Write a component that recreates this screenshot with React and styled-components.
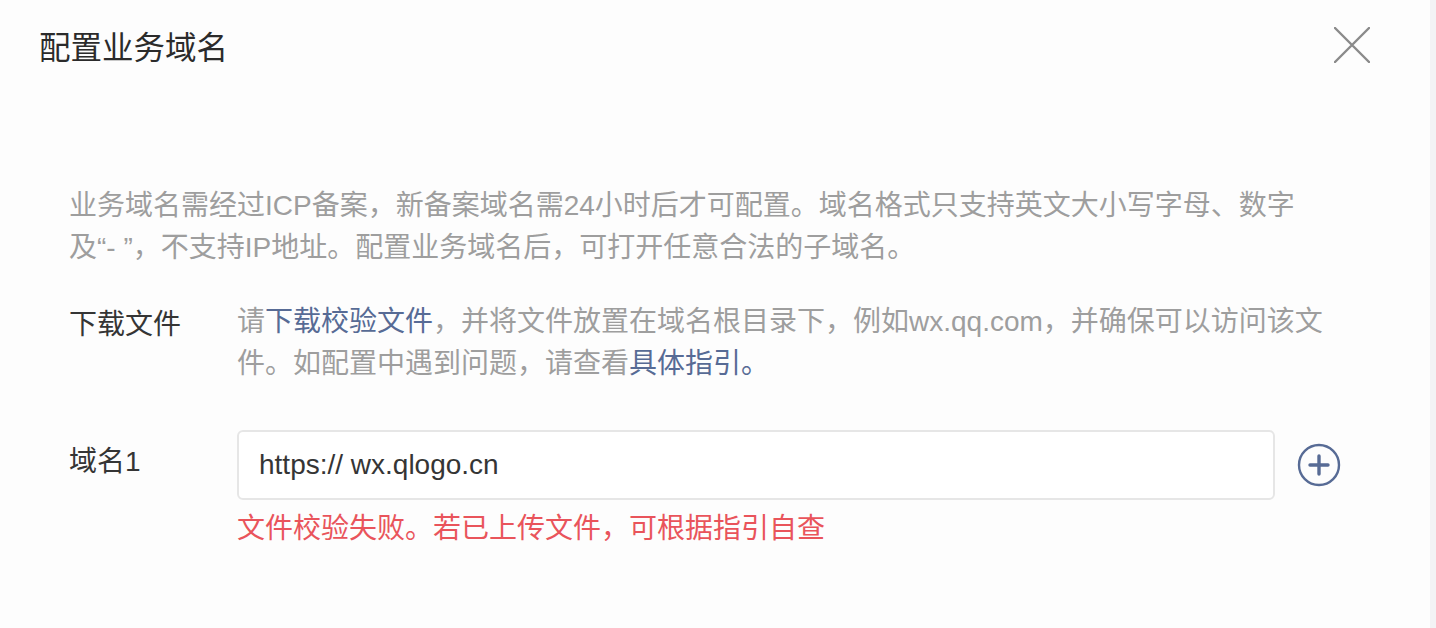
import styled, { createGlobalStyle } from "styled-components";

const GlobalStyle = createGlobalStyle`
  html, body {
    margin: 0;
    padding: 0;
    background: #ffffff;
  }
  body {
    font-family: "Liberation Sans", "Noto Sans CJK SC", sans-serif;
  }
`;

const Page = styled.div`
  display: flex;
  width: 1436px;
  height: 628px;
  overflow: hidden;
`;

const Dialog = styled.section`
  flex: 1;
  background: #fdfdfd;
  display: flex;
  flex-direction: column;
`;

const ScrollTrack = styled.div`
  width: 6px;
  background: #f3f3f5;
`;

const Header = styled.header`
  height: 90px;
  display: flex;
  align-items: center;
  justify-content: space-between;
  padding: 0 60px 0 39px;
`;

const Title = styled.h2`
  margin: 0;
  font-size: 31.5px;
  font-weight: 400;
  color: #2b2b2b;
`;

const CloseButton = styled.button`
  width: 36px;
  height: 36px;
  padding: 0;
  border: 0;
  background: none;
  cursor: pointer;
  display: flex;
  align-items: center;
  justify-content: center;
`;

const Body = styled.div`
  padding: 95px 0 0 69px;
`;

const Notice = styled.p`
  margin: 0;
  width: 1240px;
  font-size: 28px;
  line-height: 42px;
  color: #9e9e9e;
`;

const FormRow = styled.div`
  display: flex;
  align-items: flex-start;
  margin-top: ${(p) => p.$gap}px;
`;

const Label = styled.div`
  width: 168px;
  flex-shrink: 0;
  padding-top: ${(p) => p.$offset || 0}px;
  font-size: 28px;
  line-height: ${(p) => p.$lineHeight || 42}px;
  color: #353535;
`;

const Help = styled.p`
  margin: 0;
  width: 1100px;
  font-size: 28px;
  line-height: 42px;
  color: #9e9e9e;
`;

const Link = styled.a`
  color: #576b95;
  text-decoration: none;
`;

const Field = styled.div`
  display: flex;
  flex-direction: column;
`;

const InputLine = styled.div`
  display: flex;
  align-items: center;
  gap: 22px;
`;

const Input = styled.input`
  box-sizing: border-box;
  width: 1038px;
  height: 70px;
  padding: 0 20px;
  border: 2px solid #e6e6e6;
  border-radius: 6px;
  background: #fff;
  font-family: "Liberation Sans", "Noto Sans CJK SC", sans-serif;
  font-size: 28px;
  color: #353535;
  outline: none;
`;

const AddButton = styled.button`
  width: 44px;
  height: 44px;
  padding: 0;
  border: 0;
  background: none;
  cursor: pointer;
  display: flex;
  align-items: center;
  justify-content: center;
`;

const ErrorText = styled.div`
  margin-top: 8px;
  font-size: 28px;
  line-height: 42px;
  color: #e9545b;
`;

export default function App() {
  return (
    <Page>
      <GlobalStyle />
      <Dialog>
        <Header>
          <Title>配置业务域名</Title>
          <CloseButton aria-label="关闭">
            <svg width="36" height="36" viewBox="0 0 36 36">
              <path d="M1 1 L35 35 M35 1 L1 35" stroke="#8a8a8a" strokeWidth="2.4" strokeLinecap="round" />
            </svg>
          </CloseButton>
        </Header>
        <Body>
          <Notice>
            业务域名需经过ICP备案，新备案域名需24小时后才可配置。域名格式只支持英文大小写字母、数字及“- ”，不支持IP地址。配置业务域名后，可打开任意合法的子域名。
          </Notice>
          <FormRow $gap={32}>
            <Label $offset={3}>下载文件</Label>
            <Help>
              请<Link href="#">下载校验文件</Link>，并将文件放置在域名根目录下，例如wx.qq.com，并确保可以访问该文件。如配置中遇到问题，请查看<Link href="#">具体指引。</Link>
            </Help>
          </FormRow>
          <FormRow $gap={45}>
            <Label $lineHeight={64}>域名1</Label>
            <Field>
              <InputLine>
                <Input defaultValue="https:// wx.qlogo.cn" />
                <AddButton aria-label="添加">
                  <svg width="44" height="44" viewBox="0 0 44 44">
                    <circle cx="22" cy="22" r="20" fill="none" stroke="#576b95" strokeWidth="2.4" />
                    <path d="M22 13 V31 M13 22 H31" stroke="#576b95" strokeWidth="3.4" strokeLinecap="round" />
                  </svg>
                </AddButton>
              </InputLine>
              <ErrorText>文件校验失败。若已上传文件，可根据指引自查</ErrorText>
            </Field>
          </FormRow>
        </Body>
      </Dialog>
      <ScrollTrack />
    </Page>
  );
}
